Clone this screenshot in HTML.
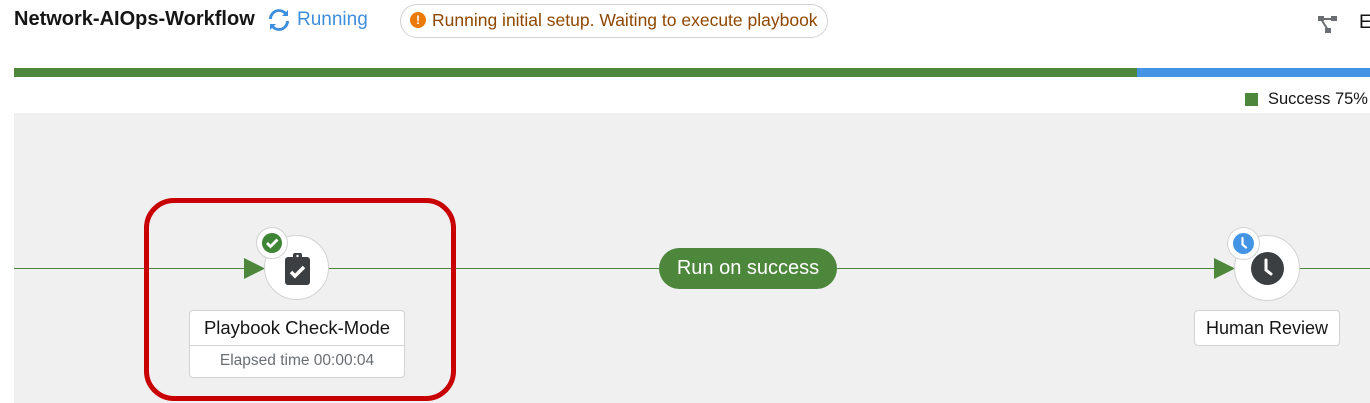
<!DOCTYPE html>
<html><head><style>
body{margin:0;width:1370px;height:403px;overflow:hidden;background:#fff;font-family:"Liberation Sans",sans-serif;position:relative}
.a{position:absolute}
</style></head><body>
<div class="a" style="left:14px;top:8px;font-size:20px;font-weight:bold;color:#151515">Network-AIOps-Workflow</div>
<svg class="a" style="left:268px;top:9px" width="22" height="22" viewBox="0 0 22 22"><path d="M4 10a7 7 0 0 1 12-5l-2 2h6V1l-2 2A10 10 0 0 0 1 10z M18 12a7 7 0 0 1-12 5l2-2H2v6l2-2a10 10 0 0 0 17-7z" fill="#3e8ede"/></svg>
<div class="a" style="left:297px;top:9px;font-size:19px;color:#3e8ede">Running</div>
<div class="a" style="left:400px;top:4px;width:428px;height:34px;border:1px solid #d2d2d2;border-radius:17px;box-sizing:border-box"></div>
<div class="a" style="left:410px;top:12px;width:16px;height:16px;border-radius:50%;background:#ec7a08;color:#fff;font-size:12px;font-weight:bold;text-align:center;line-height:16px">!</div>
<div class="a" style="left:432px;top:10px;font-size:17.5px;color:#8f4700">Running initial setup. Waiting to execute playbook</div>
<svg class="a" style="left:1318px;top:16px" width="20" height="18"><rect x="0" y="0" width="6" height="5" fill="#6a6e73"/><rect x="13" y="0" width="6" height="5" fill="#6a6e73"/><rect x="7" y="12" width="6" height="5" fill="#6a6e73"/><path d="M3 3h13M3 3l7 11" stroke="#6a6e73" stroke-width="2"/></svg>
<div class="a" style="left:1359px;top:12px;font-size:19px;color:#151515">E</div>
<div class="a" style="left:14px;top:68px;width:1123px;height:9px;background:#4c873c"></div>
<div class="a" style="left:1137px;top:68px;width:233px;height:9px;background:#4394e5"></div>
<div class="a" style="left:1245px;top:93px;width:13px;height:13px;background:#4c873c"></div>
<div class="a" style="left:1268px;top:90px;font-size:16.5px;color:#151515">Success 75%</div>
<div class="a" style="left:14px;top:113px;width:1356px;height:290px;background:#f0f0f0"></div>
<div class="a" style="left:14px;top:268px;width:1356px;height:1px;background:#4c873c"></div>
<svg class="a" style="left:244px;top:258px" width="22" height="21"><path d="M0 0L21 10.5L0 21z" fill="#4c873c"/></svg>
<svg class="a" style="left:1214px;top:258px" width="22" height="21"><path d="M0 0L21 10.5L0 21z" fill="#4c873c"/></svg>
<div class="a" style="left:264px;top:235px;width:65px;height:65px;border-radius:50%;background:#fff;border:1px solid #d2d2d2;box-sizing:border-box"></div>
<svg class="a" style="left:285px;top:253px" width="26" height="32"><rect x="0" y="4" width="25" height="28" rx="3" fill="#3c3f42"/><rect x="8" y="0" width="9" height="7" rx="2" fill="#3c3f42"/><circle cx="12.5" cy="3" r="1.2" fill="#fff"/><path d="M6 19l4 4 9-9" stroke="#fff" stroke-width="3.5" fill="none"/></svg>
<div class="a" style="left:256px;top:227px;width:32px;height:32px;border-radius:50%;background:#fff;border:1px solid #d2d2d2;box-sizing:border-box"></div>
<svg class="a" style="left:262px;top:233px" width="20" height="20"><circle cx="10" cy="10" r="10" fill="#3e8635"/><path d="M5 10l3.5 3.5 7-7" stroke="#fff" stroke-width="2.8" fill="none"/></svg>
<div class="a" style="left:189px;top:310px;width:216px;height:68px;background:#fff;border:1px solid #d2d2d2;border-radius:4px;box-sizing:border-box"></div>
<div class="a" style="left:189px;top:345px;width:216px;height:1px;background:#d2d2d2"></div>
<div class="a" style="left:189px;top:317px;width:216px;text-align:center;font-size:18.5px;color:#151515">Playbook Check-Mode</div>
<div class="a" style="left:189px;top:352px;width:216px;text-align:center;font-size:15.5px;color:#6a6e73">Elapsed time 00:00:04</div>
<div class="a" style="left:144px;top:198px;width:312px;height:203px;border:5px solid #c90000;border-radius:30px;box-sizing:border-box"></div>
<div class="a" style="left:659px;top:248px;width:178px;height:41px;border-radius:21px;background:#4c873c;color:#fff;font-size:20px;text-align:center;line-height:41px">Run on success</div>
<div class="a" style="left:1234px;top:235px;width:66px;height:66px;border-radius:50%;background:#fff;border:1px solid #d2d2d2;box-sizing:border-box"></div>
<svg class="a" style="left:1251px;top:252px" width="33" height="33"><circle cx="16.5" cy="16.5" r="16.5" fill="#3c3f42"/><path d="M15 8v10l5 4" stroke="#fff" stroke-width="3" fill="none" stroke-linecap="round"/></svg>
<div class="a" style="left:1227px;top:227px;width:33px;height:33px;border-radius:50%;background:#fff;border:1px solid #d2d2d2;box-sizing:border-box"></div>
<svg class="a" style="left:1233px;top:233px" width="21" height="21"><circle cx="10.5" cy="10.5" r="10.5" fill="#4394e5"/><path d="M9.5 5v6.5l3.5 3" stroke="#fff" stroke-width="2.2" fill="none" stroke-linecap="round"/></svg>
<div class="a" style="left:1194px;top:310px;width:146px;height:36px;background:#fff;border:1px solid #d2d2d2;border-radius:4px;box-sizing:border-box;text-align:center;line-height:34px;font-size:18px;color:#151515">Human Review</div>
</body></html>
